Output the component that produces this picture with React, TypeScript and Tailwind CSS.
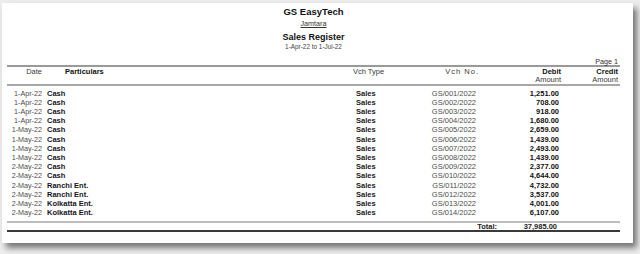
import React from 'react';

const rows: [string, string, string, string][] = [
  ['1-Apr-22', 'Cash', 'GS/001/2022', '1,251.00'],
  ['1-Apr-22', 'Cash', 'GS/002/2022', '708.00'],
  ['1-Apr-22', 'Cash', 'GS/003/2022', '918.00'],
  ['1-Apr-22', 'Cash', 'GS/004/2022', '1,680.00'],
  ['1-May-22', 'Cash', 'GS/005/2022', '2,659.00'],
  ['1-May-22', 'Cash', 'GS/006/2022', '1,439.00'],
  ['1-May-22', 'Cash', 'GS/007/2022', '2,493.00'],
  ['1-May-22', 'Cash', 'GS/008/2022', '1,439.00'],
  ['2-May-22', 'Cash', 'GS/009/2022', '2,377.00'],
  ['2-May-22', 'Cash', 'GS/010/2022', '4,644.00'],
  ['2-May-22', 'Ranchi Ent.', 'GS/011/2022', '4,732.00'],
  ['2-May-22', 'Ranchi Ent.', 'GS/012/2022', '3,537.00'],
  ['2-May-22', 'Kolkatta Ent.', 'GS/013/2022', '4,001.00'],
  ['2-May-22', 'Kolkatta Ent.', 'GS/014/2022', '6,107.00'],
];

function App() {
  return (
    <div className="w-[640px] h-[254px] overflow-hidden bg-[#ededed] pt-[3px] pl-[2px] font-['Liberation_Sans',Arial,sans-serif]">
      {/* printed page */}
      <div className="w-[631px] h-[240px] bg-white px-[5px] shadow-[4px_5px_6px_rgba(0,0,0,0.5)]">
        <div className="w-[613px]">
          {/* title block */}
          <div className="flex flex-col items-center pt-[3px]">
            <div className="h-[12px] leading-[12px] text-[9.5px] font-bold text-[#111]">GS EasyTech</div>
            <div className="h-[12px] leading-[12px] text-[7.2px] text-[#333] underline">Jamtara</div>
            <div className="h-[14px] leading-[14px] text-[9px] font-bold text-[#111]">Sales Register</div>
            <div className="h-[6px] leading-[6px] text-[6.4px] text-[#444]">1-Apr-22 to 1-Jul-22</div>
          </div>

          <div className="h-[15px] flex items-end justify-end pr-[2px]">
            <span className="leading-[6px] text-[7.2px] text-[#333]">Page 1</span>
          </div>
          <div className="h-[2px] bg-[#9a9a9a]" />

          {/* column headings */}
          <div className="text-[7.5px] text-[#3a3a3a]">
            <div className="flex h-[8.5px] leading-[9px]">
              <div className="w-[35px] text-right">Date</div>
              <div className="w-[309px] pl-[23px] font-bold text-[#111]">Particulars</div>
              <div className="w-[60px] pl-[2px]">Vch Type</div>
              <div className="w-[68px] text-right tracking-[1px]">Vch No.</div>
              <div className="w-[82px] text-right font-bold text-[#111]">Debit</div>
              <div className="w-[57px] text-right font-bold text-[#111]">Credit</div>
            </div>
            <div className="flex h-[8.5px] leading-[8.5px]">
              <div className="w-[472px]" />
              <div className="w-[82px] text-right">Amount</div>
              <div className="w-[57px] text-right">Amount</div>
            </div>
          </div>
          <div className="h-[1.5px] bg-[#a8a8a8]" />

          {/* entries */}
          <div className="pt-[3px] text-[7.5px]">
            {rows.map(([date, party, no, amt], i) => (
              <div key={i} className="flex h-[9.23px] leading-[9.23px]">
                <div className="w-[35px] text-right text-[7.2px] text-[#4d4d4d]">{date}</div>
                <div className="w-[314px] pl-[5px] font-bold text-[#14141e]">{party}</div>
                <div className="w-[60px] font-bold text-[#1a1a24]">Sales</div>
                <div className="w-[60px] text-right text-[#4d4d4d]">{no}</div>
                <div className="w-[83px] text-right font-bold text-[#111]">{amt}</div>
                <div className="w-[59px]" />
              </div>
            ))}
          </div>

          <div className="mt-[3.5px] h-[2px] bg-[#bdbdbd]" />
          <div className="flex h-[6.5px] leading-[7px] text-[7.5px] font-bold text-[#222]">
            <div className="w-[490px] text-right">Total:</div>
            <div className="w-[60px] text-right">37,985.00</div>
          </div>
          <div className="h-[2px] bg-[#3a3a3a]" />
        </div>
      </div>
    </div>
  );
}

export default App;
